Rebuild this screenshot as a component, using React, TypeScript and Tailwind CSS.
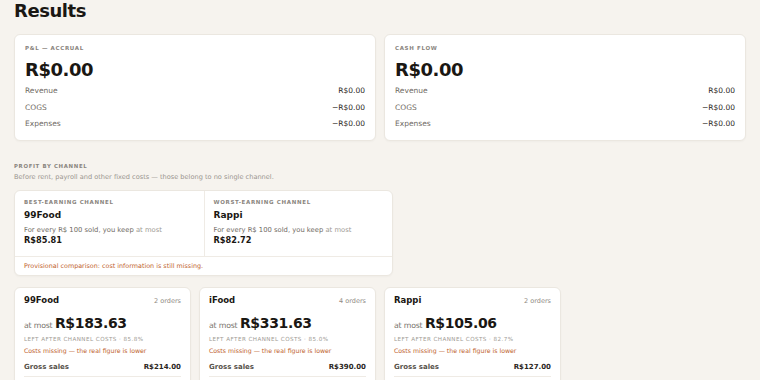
import React from "react";

const F = { fontFamily: '"DejaVu Sans", sans-serif' };

function SummaryCard({ label }: { label: string }) {
  return (
    <div className="rounded-[6px] border border-[#ebe7e0] bg-white px-[10px] pt-[9px] pb-[7px] shadow-[0_1px_2px_rgba(0,0,0,0.03)]">
      <div className="text-[5.5px] leading-[8px] font-bold tracking-[0.12em] text-[#8a857e]">{label}</div>
      <div className="mt-[6.5px] text-[18px] leading-[22px] font-bold tracking-tight text-[#1a1713]">R$0.00</div>
      <div className="mt-[2.5px] text-[7.5px] text-[#6f6a63]">
        <div className="flex justify-between leading-[16.5px]"><span>Revenue</span><span className="text-[#2a2622]">R$0.00</span></div>
        <div className="flex justify-between leading-[16.5px]"><span>COGS</span><span className="text-[#2a2622]">−R$0.00</span></div>
        <div className="flex justify-between leading-[16.5px]"><span>Expenses</span><span className="text-[#2a2622]">−R$0.00</span></div>
      </div>
    </div>
  );
}

function ChannelCard({ name, orders, value, pct, gross }: { name: string; orders: string; value: string; pct: string; gross: string }) {
  return (
    <div className="h-[120px] rounded-[6px] border border-[#ebe7e0] bg-white px-[9px] pt-[6.5px] shadow-[0_1px_2px_rgba(0,0,0,0.03)]">
      <div className="flex items-baseline justify-between leading-[12px]">
        <span className="text-[8.5px] font-bold text-[#1a1713]">{name}</span>
        <span className="text-[6.5px] text-[#8f8a83]">{orders}</span>
      </div>
      <div className="mt-[6.5px] flex items-baseline gap-[2.5px] leading-[18px]">
        <span className="text-[7.8px] tracking-tight text-[#7a756e]">at most</span>
        <span className="text-[14px] font-bold tracking-tight text-[#1a1713]">{value}</span>
      </div>
      <div className="mt-[0px] text-[5.6px] leading-[8px] tracking-[0.08em] text-[#a09b94]">LEFT AFTER CHANNEL COSTS · {pct}</div>
      <div className="mt-[3.5px] text-[6.2px] leading-[9px] text-[#c0622d]">Costs missing — the real figure is lower</div>
      <div className="mt-[6.5px] flex justify-between border-b border-[#efebe5] pb-[4px] text-[7px] leading-[10px] font-bold">
        <span className="text-[#57524b]">Gross sales</span>
        <span className="text-[#2a2622]">{gross}</span>
      </div>
    </div>
  );
}

export default function App() {
  return (
    <div style={F} className="min-h-[380px] w-[760px] overflow-hidden bg-[#f6f3ee] px-[14px]">
      <h1 className="text-[18px] leading-[22px] font-bold tracking-tight text-[#1a1713]">Results</h1>
      <div className="mt-[12px] grid grid-cols-2 gap-[8px]">
        <SummaryCard label="P&L — ACCRUAL" />
        <SummaryCard label="CASH FLOW" />
      </div>
      <div className="mt-[21px] text-[5.4px] leading-[8px] font-bold tracking-[0.12em] text-[#8a857e]">PROFIT BY CHANNEL</div>
      <div className="mt-[2px] text-[6.6px] leading-[10px] text-[#9a958e]">Before rent, payroll and other fixed costs — those belong to no single channel.</div>
      <div className="mt-[8.3px] w-[379px] rounded-[6px] border border-[#ebe7e0] bg-white shadow-[0_1px_2px_rgba(0,0,0,0.03)]">
        <div className="grid grid-cols-2">
          {[
            { label: "BEST-EARNING CHANNEL", name: "99Food", value: "R$85.81" },
            { label: "WORST-EARNING CHANNEL", name: "Rappi", value: "R$82.72" },
          ].map((c, i) => (
            <div key={i} className={"px-[9px] pt-[7px] pb-[9.4px] " + (i === 1 ? "border-l border-[#efebe5]" : "")}>
              <div className="text-[5.5px] leading-[8px] font-bold tracking-[0.12em] text-[#8a857e]">{c.label}</div>
              <div className="mt-[3.6px] text-[9px] leading-[12px] font-bold text-[#1a1713]">{c.name}</div>
              <div className="mt-[3.4px] text-[6.8px] leading-[10px] text-[#6f6a63]">For every R$ 100 sold, you keep <span className="text-[#a09b94]">at most</span></div>
              <div className="mt-[0.4px] text-[8.2px] leading-[11px] font-bold text-[#1a1713]">{c.value}</div>
            </div>
          ))}
        </div>
        <div className="border-t border-[#efebe5] px-[9px] pt-[5.3px] pb-[4px] text-[6.4px] leading-[9px] text-[#c0622d]">Provisional comparison: cost information is still missing.</div>
      </div>
      <div className="mt-[11px] grid grid-cols-4 gap-[8px]">
        <ChannelCard name="99Food" orders="2 orders" value="R$183.63" pct="85.8%" gross="R$214.00" />
        <ChannelCard name="iFood" orders="4 orders" value="R$331.63" pct="85.0%" gross="R$390.00" />
        <ChannelCard name="Rappi" orders="2 orders" value="R$105.06" pct="82.7%" gross="R$127.00" />
      </div>
    </div>
  );
}
